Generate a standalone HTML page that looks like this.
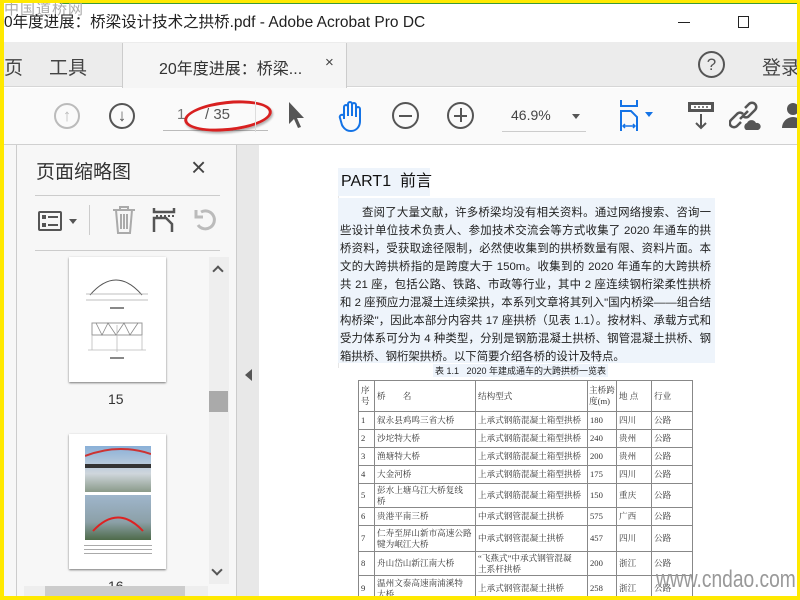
<!DOCTYPE html>
<html style="width:800px;height:600px;overflow:hidden"><head><meta charset="utf-8">
<style>
*{margin:0;padding:0;box-sizing:border-box}
body{width:800px;height:600px;overflow:hidden;position:relative;background:#fff;font-family:"Liberation Sans","Noto Sans CJK SC",sans-serif;}
#root{position:absolute;left:0;top:0;width:800px;height:600px;overflow:hidden}
.a{position:absolute}
.para div{height:18px;line-height:18px;text-align:justify;text-align-last:justify;overflow:hidden;font-size:11.4px;color:#222;}
table{border-collapse:collapse;table-layout:fixed;font-family:"Liberation Serif","Noto Serif CJK SC",serif;font-size:8.6px;color:#333}
td{border:1px solid #888;padding:0 2px;line-height:11px;vertical-align:middle;white-space:nowrap;overflow:hidden}
</style></head><body><div id="root">
<!-- title bar -->
<div class="a" style="left:0;top:0;width:800px;height:42px;background:#fff"></div>
<div class="a" style="left:60px;top:3px;width:740px;height:1px;background:#3a9a3a"></div>
<div class="a" style="left:4px;top:0;font-size:15px;color:#aaa;letter-spacing:1px;line-height:20px">中国道桥网</div>
<div class="a" style="left:4px;top:13px;font-size:15.5px;color:#222;line-height:20px">0年度进展：桥梁设计技术之拱桥.pdf - Adobe Acrobat Pro DC</div>
<div class="a" style="left:678px;top:22px;width:12px;height:1px;background:#222"></div>
<div class="a" style="left:738px;top:16px;width:11px;height:12px;border:1px solid #222"></div>
<!-- tab bar -->
<div class="a" style="left:0;top:42px;width:800px;height:45px;background:#ececec;border-bottom:1px solid #d6d6d6"></div>
<div class="a" style="left:122px;top:43px;width:225px;height:45px;background:#f5f5f5;border-left:1px solid #ccc;border-right:1px solid #ccc"></div>
<div class="a" style="left:4px;top:53px;font-size:19px;color:#444">页</div>
<div class="a" style="left:49px;top:53px;font-size:19px;color:#444">工具</div>
<div class="a" style="left:159px;top:55px;font-size:16px;color:#333">20年度进展：桥梁...</div>
<div class="a" style="left:325px;top:54px;font-size:15px;color:#444">×</div>
<div class="a" style="left:698px;top:51px;width:27px;height:27px;border:2px solid #555;border-radius:50%;text-align:center;font-size:17px;line-height:23px;color:#555">?</div>
<div class="a" style="left:762px;top:53px;font-size:19px;color:#444">登录</div>
<!-- toolbar -->
<div class="a" style="left:0;top:88px;width:800px;height:57px;background:#fafafa;border-bottom:1px solid #d0d0d0"></div>
<div class="a" style="left:54px;top:103px;width:26px;height:26px;border:2px solid #bbb;border-radius:50%;text-align:center;color:#bbb;font-size:17px;line-height:22px;font-weight:bold">↑</div>
<div class="a" style="left:109px;top:103px;width:26px;height:26px;border:2px solid #555;border-radius:50%;text-align:center;color:#555;font-size:17px;line-height:22px;font-weight:bold">↓</div>
<div class="a" style="left:177px;top:106px;font-size:15px;color:#777">1</div>
<div class="a" style="left:205px;top:106px;font-size:15px;color:#555">/ 35</div>
<div class="a" style="left:163px;top:130px;width:105px;height:1px;background:#bbb"></div>
<div class="a" style="left:184px;top:101px;width:88px;height:30px;border:3px solid #d82020;border-radius:50%;transform:rotate(-6deg);box-shadow:1px 2px 2px rgba(0,0,0,.3)"></div>
<div class="a" style="left:255px;top:100px;width:1px;height:32px;background:#ddd"></div>
<svg class="a" style="left:286px;top:100px" width="20" height="30"><path d="M3 2 L3 24 L8 19 L12 28 L15 27 L11 18 L18 18 Z" fill="#555"/></svg>
<svg class="a" style="left:336px;top:99px" width="30" height="34"><path d="M8 20 V8 a2 2 0 0 1 4 0 V17 V5 a2 2 0 0 1 4 0 V17 V6 a2 2 0 0 1 4 0 V18 V10 a2 2 0 0 1 4 0 V22 c0 6 -4 10 -9 10 c-4 0 -7 -2 -9 -6 L4 19 a2 2 0 0 1 4 -2 Z" fill="none" stroke="#1473e6" stroke-width="2"/></svg>
<div class="a" style="left:392px;top:102px;width:27px;height:27px;border:2px solid #555;border-radius:50%"></div>
<div class="a" style="left:399px;top:115px;width:13px;height:2px;background:#555"></div>
<div class="a" style="left:447px;top:102px;width:27px;height:27px;border:2px solid #555;border-radius:50%"></div>
<div class="a" style="left:454px;top:115px;width:13px;height:2px;background:#555"></div>
<div class="a" style="left:460px;top:108px;width:2px;height:14px;background:#555"></div>
<div class="a" style="left:511px;top:107px;font-size:14px;color:#444">46.9%</div>
<div class="a" style="left:572px;top:114px;border-left:4px solid transparent;border-right:4px solid transparent;border-top:5px solid #555"></div>
<div class="a" style="left:502px;top:131px;width:84px;height:1px;background:#ccc"></div>
<svg class="a" style="left:618px;top:99px" width="40" height="32"><path d="M3 1 V7 H19 V1" fill="none" stroke="#1473e6" stroke-width="2"/><path d="M3 32 V12 H13 L19 18 V32" fill="none" stroke="#1473e6" stroke-width="2"/><path d="M5 27 H17 M7 25 L5 27 L7 29 M15 25 L17 27 L15 29" stroke="#1473e6" stroke-width="1.5" fill="none"/><path d="M27 13 L35 13 L31 18 Z" fill="#1473e6"/></svg>
<svg class="a" style="left:686px;top:100px" width="30" height="30"><rect x="2" y="2" width="26" height="10" fill="#555"/><rect x="5" y="5" width="20" height="4" fill="#fff"/><path d="M8 7h2M12 7h2M16 7h2M20 7h2" stroke="#555" stroke-width="1.5"/><path d="M15 14 V28 M10 23 L15 28 L20 23" stroke="#555" stroke-width="2" fill="none"/></svg>
<svg class="a" style="left:729px;top:100px" width="34" height="32"><path d="M12 22 l-4 4 a4 4 0 0 1 -6 -6 l6 -6 a4 4 0 0 1 6 0 M16 8 l4 -4 a4 4 0 0 1 6 6 l-6 6 a4 4 0 0 1 -6 0 M11 19 L19 11" stroke="#555" stroke-width="2.5" fill="none"/><path d="M17 30 a4 4 0 0 1 1 -7 a5 5 0 0 1 9 0 a3.5 3.5 0 0 1 2 7 Z" fill="#555"/></svg>
<svg class="a" style="left:780px;top:100px" width="20" height="30"><circle cx="13" cy="9" r="6" fill="#555"/><path d="M2 28 a11 11 0 0 1 22 0 Z" fill="#555"/></svg>
<!-- left panel -->
<div class="a" style="left:0;top:145px;width:237px;height:455px;background:#f7f7f7"></div>
<div class="a" style="left:16px;top:145px;width:1px;height:455px;background:#ccc"></div>
<div class="a" style="left:236px;top:145px;width:1px;height:455px;background:#ccc"></div>
<div class="a" style="left:237px;top:145px;width:22px;height:455px;background:#e8e8e8"></div>
<div class="a" style="left:245px;top:369px;border-top:6px solid transparent;border-bottom:6px solid transparent;border-right:7px solid #555"></div>
<div class="a" style="left:36px;top:157px;font-size:19px;color:#333">页面缩略图</div>
<div class="a" style="left:191px;top:152px;font-size:26px;color:#444;line-height:30px">×</div>
<div class="a" style="left:35px;top:195px;width:185px;height:1px;background:#ccc"></div>
<div class="a" style="left:35px;top:250px;width:185px;height:1px;background:#ccc"></div>
<div class="a" style="left:38px;top:211px;width:24px;height:20px;border:2px solid #555;border-radius:2px"></div>
<div class="a" style="left:42px;top:215px;width:4px;height:4px;background:#555"></div>
<div class="a" style="left:42px;top:223px;width:4px;height:4px;background:#555"></div>
<div class="a" style="left:48px;top:216px;width:10px;height:2px;background:#555"></div>
<div class="a" style="left:48px;top:224px;width:10px;height:2px;background:#555"></div>
<div class="a" style="left:69px;top:219px;border-left:4px solid transparent;border-right:4px solid transparent;border-top:5px solid #555"></div>
<div class="a" style="left:89px;top:205px;width:1px;height:30px;background:#ccc"></div>
<svg class="a" style="left:110px;top:205px" width="28" height="30"><path d="M3 5 H25 M10 5 V2 H18 V5 M6 5 L8 28 H20 L22 5 M11 9 V24 M14 9 V24 M17 9 V24" stroke="#aaa" stroke-width="2" fill="none"/></svg>
<svg class="a" style="left:152px;top:206px" width="24" height="28"><path d="M2 2 V6 H22 V2 M2 26 V12 H14 L20 18 V26" stroke="#555" stroke-width="2.5" fill="none"/><path d="M4 10h2M8 10h2M12 10h2M16 10h2M20 10h2" stroke="#555" stroke-width="2"/></svg>
<svg class="a" style="left:192px;top:207px" width="30" height="26"><path d="M6 18 a9 9 0 1 0 3 -13 M4 3 V10 H11" stroke="#bbb" stroke-width="3" fill="none"/></svg>
<!-- thumbnails -->
<div class="a" style="left:69px;top:257px;width:97px;height:125px;background:#fff;box-shadow:0 1px 2px #777"></div>
<svg class="a" style="left:80px;top:260px" width="74" height="100"><path d="M10 35 Q36 5 62 35" stroke="#555" fill="none"/><path d="M6 34 H68 M6 40 H68" stroke="#aaa" stroke-width=".8"/><rect x="30" y="47" width="14" height="2" fill="#888"/><rect x="12" y="63" width="50" height="12" fill="none" stroke="#999"/><path d="M16 63 L22 75 L28 63 L36 75 L44 63 L50 75 L58 63" stroke="#888" fill="none" stroke-width=".8"/><path d="M12 75 V90 M62 75 V90 M37 65 V92 M8 90 H66" stroke="#bbb" stroke-width=".8"/><rect x="30" y="97" width="14" height="2" fill="#888"/></svg>
<div class="a" style="left:108px;top:391px;font-size:14px;color:#333">15</div>
<div class="a" style="left:69px;top:434px;width:97px;height:135px;background:#fff;box-shadow:0 1px 2px #777"></div>
<div class="a" style="left:85px;top:446px;width:66px;height:46px;background:linear-gradient(#8ab0d8,#cfd6dc 60%,#8a9a8a)"></div>
<div class="a" style="left:85px;top:495px;width:66px;height:45px;background:linear-gradient(#9fb6cc,#8ca0a8 60%,#4e6a4a)"></div>
<svg class="a" style="left:85px;top:446px" width="66" height="94"><path d="M0 10 Q33 -3 66 8" stroke="#c33" stroke-width="2" fill="none"/><path d="M0 20 H66" stroke="#333" stroke-width="4"/><path d="M8 85 Q33 58 58 85" stroke="#d22" stroke-width="2" fill="none"/></svg>
<div class="a" style="left:84px;top:544px;width:68px;height:12px;background:repeating-linear-gradient(#fff 0,#fff 1px,#aaa 1px,#aaa 2px,#fff 2px,#fff 4px)"></div>
<div class="a" style="left:108px;top:578px;font-size:14px;color:#333;height:10px;overflow:hidden">16</div>
<div class="a" style="left:209px;top:257px;width:20px;height:327px;background:#eee"></div>
<div class="a" style="left:209px;top:391px;width:19px;height:21px;background:#aaa"></div>
<div class="a" style="left:214px;top:267px;width:8px;height:8px;border-left:2px solid #555;border-top:2px solid #555;transform:rotate(45deg)"></div>
<div class="a" style="left:213px;top:566px;width:8px;height:8px;border-right:2px solid #555;border-bottom:2px solid #555;transform:rotate(45deg)"></div>
<div class="a" style="left:24px;top:586px;width:184px;height:14px;background:#eee"></div>
<div class="a" style="left:45px;top:586px;width:140px;height:14px;background:#ccc"></div>
<!-- document area -->
<div class="a" style="left:259px;top:145px;width:541px;height:455px;background:#fff"></div>
<div class="a" style="left:338px;top:168px;width:1px;height:200px;background:#e6e6e6"></div>
<div class="a" style="left:338px;top:168px;width:92px;height:28px;background:#eef4fb"></div>
<div class="a" style="left:341px;top:172px;font-size:16px;color:#111;line-height:20px">PART1&nbsp; 前言</div>
<div class="a" style="left:338px;top:198px;width:377px;height:165px;background:#eef4fb"></div>
<div class="a para" style="left:340px;top:204px;width:371px">
<div style="text-indent:22px">查阅了大量文献，许多桥梁均没有相关资料。通过网络搜索、咨询一</div>
<div>些设计单位技术负责人、参加技术交流会等方式收集了 2020 年通车的拱</div>
<div>桥资料，受获取途径限制，必然使收集到的拱桥数量有限、资料片面。本</div>
<div>文的大跨拱桥指的是跨度大于 150m。收集到的 2020 年通车的大跨拱桥</div>
<div>共 21 座，包括公路、铁路、市政等行业，其中 2 座连续钢桁梁柔性拱桥</div>
<div>和 2 座预应力混凝土连续梁拱，本系列文章将其列入"国内桥梁——组合结</div>
<div>构桥梁"，因此本部分内容共 17 座拱桥（见表 1.1）。按材料、承载方式和</div>
<div>受力体系可分为 4 种类型，分别是钢筋混凝土拱桥、钢管混凝土拱桥、钢</div>
<div style="text-align-last:left">箱拱桥、钢桁架拱桥。以下简要介绍各桥的设计及特点。</div>
</div>
<div class="a" style="left:433px;top:364px;font-size:9px;color:#222;background:#eef4fb;padding:0 2px">表 1.1&nbsp;&nbsp; 2020 年建成通车的大跨拱桥一览表</div>
<table class="a" style="left:358px;top:380px;width:334px">
<colgroup><col style="width:16px"><col style="width:101px"><col style="width:112px"><col style="width:29px"><col style="width:35px"><col style="width:41px"></colgroup>
<tr style="height:31px"><td>序<br>号</td><td>桥&nbsp;&nbsp;&nbsp;&nbsp;&nbsp;&nbsp;&nbsp; 名</td><td>结构型式</td><td style="padding:0 1px">主桥跨<br>度(m)</td><td>地 点</td><td>行业</td></tr>
<tr style="height:18px"><td>1</td><td>叙永县鸡鸣三省大桥</td><td>上承式钢筋混凝土箱型拱桥</td><td>180</td><td>四川</td><td>公路</td></tr>
<tr style="height:18px"><td>2</td><td>沙坨特大桥</td><td>上承式钢筋混凝土箱型拱桥</td><td>240</td><td>贵州</td><td>公路</td></tr>
<tr style="height:18px"><td>3</td><td>渔塘特大桥</td><td>上承式钢筋混凝土箱型拱桥</td><td>200</td><td>贵州</td><td>公路</td></tr>
<tr style="height:18px"><td>4</td><td>大金河桥</td><td>上承式钢筋混凝土箱型拱桥</td><td>175</td><td>四川</td><td>公路</td></tr>
<tr style="height:24px"><td>5</td><td>彭水上塘乌江大桥复线<br>桥</td><td>上承式钢筋混凝土箱型拱桥</td><td>150</td><td>重庆</td><td>公路</td></tr>
<tr style="height:18px"><td>6</td><td>贵港平南三桥</td><td>中承式钢管混凝土拱桥</td><td>575</td><td>广西</td><td>公路</td></tr>
<tr style="height:26px"><td>7</td><td>仁寿至屏山新市高速公路<br>犍为岷江大桥</td><td>中承式钢管混凝土拱桥</td><td>457</td><td>四川</td><td>公路</td></tr>
<tr style="height:24px"><td>8</td><td>舟山岱山新江南大桥</td><td>“飞燕式”中承式钢管混凝<br>土系杆拱桥</td><td>200</td><td>浙江</td><td>公路</td></tr>
<tr style="height:26px"><td>9</td><td>温州文泰高速南浦溪特<br>大桥</td><td>上承式钢管混凝土拱桥</td><td>258</td><td>浙江</td><td>公路</td></tr>
</table>
<div class="a" style="left:656px;top:566px;font-size:24px;color:#999;transform:scaleX(.8);transform-origin:left">www.cndao.com</div>
<!-- yellow frame -->
<div class="a" style="left:0;top:0;width:800px;height:3px;background:#ffe900"></div>
<div class="a" style="left:0;top:0;width:4px;height:600px;background:#ffe900"></div>
<div class="a" style="left:797px;top:0;width:3px;height:600px;background:#ffe900"></div>
<div class="a" style="left:0;top:596px;width:800px;height:4px;background:#ffe900"></div>
</div></body></html>
